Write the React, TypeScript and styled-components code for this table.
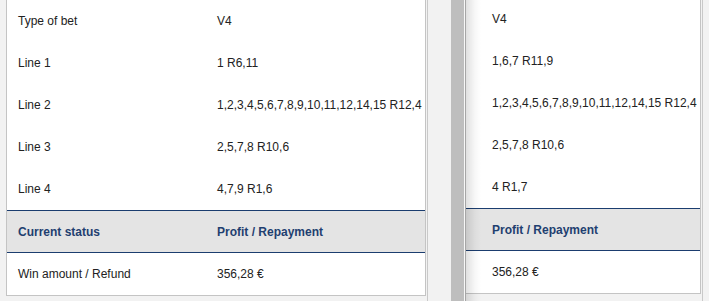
import React from 'react';
import styled, { createGlobalStyle } from 'styled-components';

const GlobalStyle = createGlobalStyle`
  html, body {
    margin: 0;
    padding: 0;
    background: #f2f2f2;
    font-family: 'Liberation Sans', Arial, sans-serif;
  }
`;

interface IBetRow {
  label: string;
  value: string;
}

const betRows: IBetRow[] = [
  { label: 'Type of bet', value: 'V4' },
  { label: 'Line 1', value: '1 R6,11' },
  { label: 'Line 2', value: '1,2,3,4,5,6,7,8,9,10,11,12,14,15 R12,4' },
  { label: 'Line 3', value: '2,5,7,8 R10,6' },
  { label: 'Line 4', value: '4,7,9 R1,6' },
];

const compareRows: string[] = ['V4', '1,6,7 R11,9', '1,2,3,4,5,6,7,8,9,10,11,12,14,15 R12,4', '2,5,7,8 R10,6', '4 R1,7'];

const App = () => {
  return (
    <>
      <GlobalStyle />
      <Page>
        <MainColumn>
          <Panel $width={420} $shift={0}>
            {betRows.map((row) => (
              <Row key={row.label}>
                <Label>{row.label}</Label>
                <Value>{row.value}</Value>
              </Row>
            ))}
            <HeaderRow>
              <Label>Current status</Label>
              <Value>Profit / Repayment</Value>
            </HeaderRow>
            <Row>
              <Label>Win amount / Refund</Label>
              <Value>356,28 €</Value>
            </Row>
          </Panel>
        </MainColumn>
        <Divider />
        <CompareColumn>
          <Panel $width={235} $shift={-2} $noLeft>
            {compareRows.map((value, i) => (
              <Row key={i} $indent>
                <Value>{value}</Value>
              </Row>
            ))}
            <HeaderRow $indent>
              <Value>Profit / Repayment</Value>
            </HeaderRow>
            <Row $indent>
              <Value>356,28 €</Value>
            </Row>
          </Panel>
        </CompareColumn>
      </Page>
    </>
  );
};

const Page = styled.div`
  display: flex;
  flex-direction: row;
  align-items: stretch;
  height: 301px;
  overflow: hidden;
`;

const MainColumn = styled.div`
  display: flex;
  flex-direction: column;
  padding: 0 1px 0 6px;
  border-right: 1px solid #c9c9c9;
`;

const Divider = styled.div`
  width: 13px;
  margin-left: 23px;
  background: #bebebe;
  border-right: 1px solid #f7f7f7;
`;

const CompareColumn = styled.div`
  position: relative;
  display: flex;
  flex-direction: column;
  padding-right: 1px;
  border-left: 1px solid #a6a6a6;
  border-right: 1px solid #c9c9c9;

  &::after {
    content: '';
    position: absolute;
    top: 0;
    bottom: 0;
    left: 0;
    width: 15px;
    background: linear-gradient(to right, rgba(0, 0, 0, 0.12), rgba(0, 0, 0, 0.03) 60%, rgba(0, 0, 0, 0));
    pointer-events: none;
  }
`;

const Panel = styled.div<{ $width: number; $shift: number; $noLeft?: boolean }>`
  display: flex;
  flex-direction: column;
  width: ${(props) => props.$width}px;
  box-sizing: border-box;
  margin-top: ${(props) => props.$shift}px;
  background: #ffffff;
  border: 1px solid #c4c4c4;
  border-top: none;
  border-left: ${(props) => (props.$noLeft ? 'none' : '1px solid #c4c4c4')};
`;

const Row = styled.div<{ $indent?: boolean }>`
  display: flex;
  flex-direction: row;
  align-items: center;
  height: 42px;
  padding-left: ${(props) => (props.$indent ? 26 : 11)}px;
  font-size: 12px;
  color: #222222;
  white-space: nowrap;
`;

const HeaderRow = styled(Row)`
  height: 41px;
  background: #e4e4e4;
  border-top: 1px solid #1b3d6f;
  border-bottom: 1px solid #1b3d6f;
  color: #1f3f70;
  font-weight: bold;
`;

const Label = styled.div`
  width: 199px;
  flex-shrink: 0;
`;

const Value = styled.div`
  flex: 1;
`;

export default App;
